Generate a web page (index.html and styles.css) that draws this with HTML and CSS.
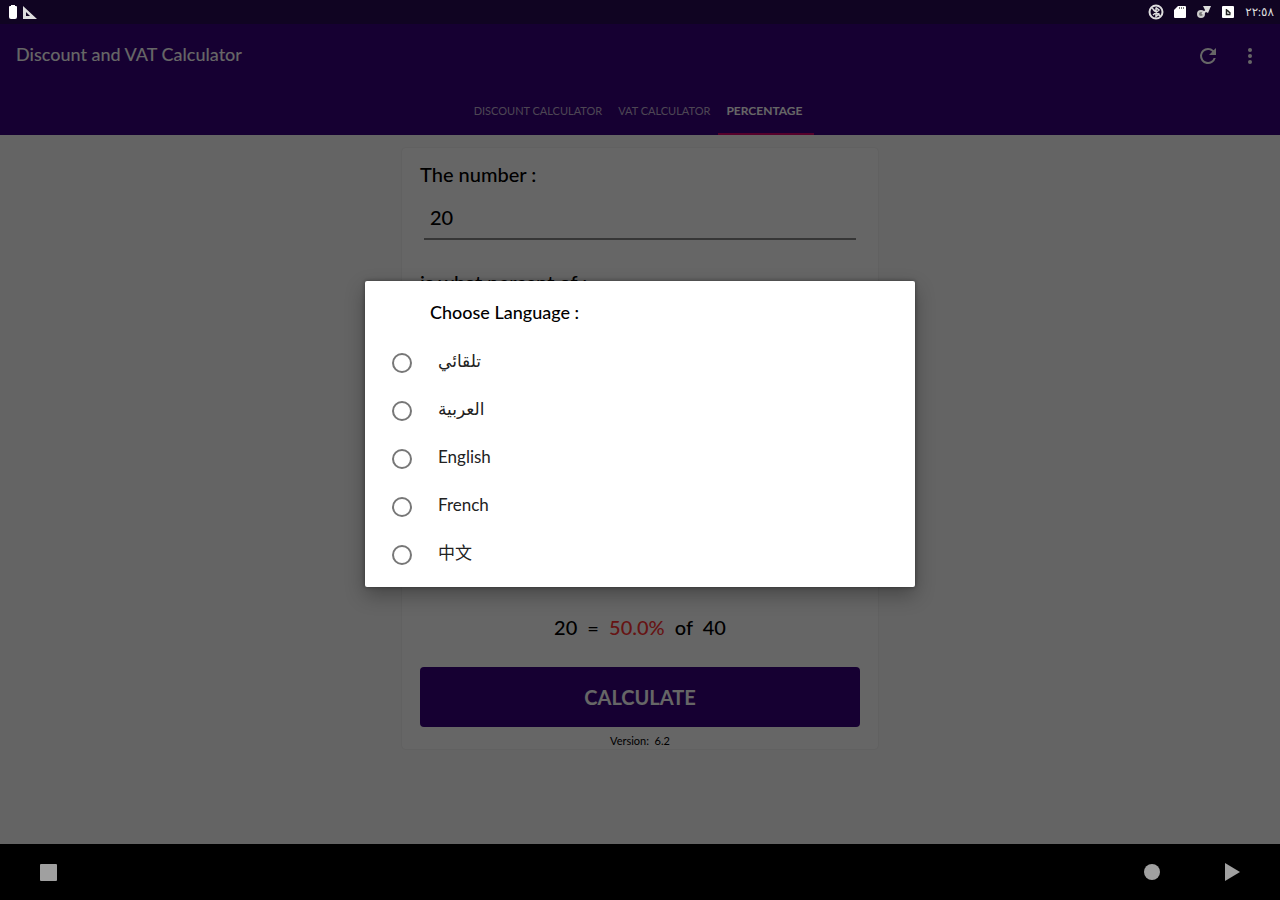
FILE: index.html
```html
<!doctype html>
<html lang="en">
<head>
    <meta charset="UTF-8">
    <meta name="viewport" content="width=device-width, initial-scale=1.0">
    <title>Discount and VAT Calculator</title>
    <link rel="stylesheet" href="styles.css">
</head>
<body>

    <div class="status">
        <div class="status__group">
            <svg width="10" height="16" viewBox="0 0 10 16"><path fill="#fff" d="M3 1h4v1h1q1 0 1 1v10q0 2-2 2H3q-2 0-2-2V3q0-1 1-1h1z"/></svg>
            <svg width="14" height="16" viewBox="0 0 14 16"><path fill="#ddd" fill-rule="evenodd" d="M0 2l14 13H0zM3 8v4h4z"/></svg>
        </div>
        <div class="status__group status__group-right">
            <svg width="16" height="16" viewBox="0 0 16 16" fill="none" stroke="#ddd"><circle cx="8" cy="8" r="6.5" stroke-width="2"/><path stroke-width="1.5" d="M4 4l8 8M8 3.5l3 2.5-6 5M8 3.5v9l3-2.5-6-4"/></svg>
            <svg width="16" height="16" viewBox="0 0 16 16"><path fill="#fff" d="M6 2h7q1 0 1 1v10q0 1-1 1H3q-1 0-1-1V6z"/><path stroke="#777" d="M7.5 3v2M9.500 3v2M11.500 3v2"/></svg>
            <svg width="16" height="16" viewBox="0 0 16 16"><path fill="#ddd" d="M7 2h8l-3 7-2-1z"/><circle cx="5" cy="10" r="3" fill="#777" stroke="#ccc" stroke-width="2"/><path stroke="#ddd" stroke-width="2" d="M6 10l5-4"/></svg>
            <svg width="16" height="16" viewBox="0 0 16 16"><rect x="2" y="2" width="12" height="12" rx="1" fill="#fff"/><path fill="none" stroke="#222" stroke-width="1.5" d="M6.500 5v5.500h4M6.500 5.500l4 4"/></svg>
            <span class="status__time">٢٢:٥٨</span>
        </div>
    </div>

    <div class="app">
        <header class="header">
            <div class="header__top">
                <h1>Discount and VAT Calculator</h1>
                <div class="header__actions">
                    <button type="button" aria-label="Refresh">
                        <svg width="24" height="24" viewBox="0 0 24 24"><path fill="#fff" d="M17.65 6.35A7.96 7.96 0 0 0 12 4a8 8 0 1 0 7.73 10h-2.08A6 6 0 1 1 12 6c1.66 0 3.14.69 4.22 1.78L13 11h7V4z"/></svg>
                    </button>
                    <button type="button" aria-label="More">
                        <svg width="24" height="24" viewBox="0 0 24 24" fill="#fff"><circle cx="12" cy="6" r="2"/><circle cx="12" cy="12" r="2"/><circle cx="12" cy="18" r="2"/></svg>
                    </button>
                </div>
            </div>
            <nav class="tabs">
                <a href="#">DISCOUNT CALCULATOR</a>
                <a href="#">VAT CALCULATOR</a>
                <a href="#" class="active">PERCENTAGE</a>
            </nav>
        </header>

        <main class="card">
            <div class="field">
                <label for="number">The number :</label>
                <input type="text" id="number" value="20">
            </div>
            <div class="field">
                <label for="total">is what percent of :</label>
                <input type="text" id="total" value="40">
            </div>
            <div class="result">20 &nbsp;=&nbsp; <span>50.0%</span> &nbsp;of&nbsp; 40</div>
            <button type="button" class="calculate">CALCULATE</button>
            <div class="version">Version: &nbsp;6.2</div>
        </main>

        <div class="overlay">
            <div class="dialog" role="dialog" aria-labelledby="dialog-title">
                <h2 id="dialog-title">Choose Language :</h2>
                <label class="option"><input type="radio" name="lang"><span lang="ar">تلقائي</span></label>
                <label class="option"><input type="radio" name="lang"><span lang="ar">العربية</span></label>
                <label class="option"><input type="radio" name="lang"><span>English</span></label>
                <label class="option"><input type="radio" name="lang"><span>French</span></label>
                <label class="option"><input type="radio" name="lang"><span lang="zh">中文</span></label>
            </div>
        </div>
    </div>

    <div class="navbar">
        <svg width="17" height="17" viewBox="0 0 17 17"><rect width="17" height="17" rx="1" fill="#a0a0a0"/></svg>
        <div class="navbar__right">
            <svg width="16" height="16" viewBox="0 0 16 16"><circle cx="8" cy="8" r="8" fill="#a0a0a0"/></svg>
            <svg width="16" height="18" viewBox="0 0 16 18"><path d="M1 0l15 9-15 9z" fill="#a0a0a0"/></svg>
        </div>
    </div>

</body>
</html>
```
FILE: styles.css
```css
*,*:before,*:after{
    box-sizing: border-box;
    font-family: "Lato", "DejaVu Sans", "Noto Sans CJK SC", sans-serif;
}
body{
    display: flex;
    flex-direction: column;
    min-height: 100vh;
    margin: 0;
    background: #000;
}
svg{
    display: block;
}
button{
    border: none;
    padding: 0;
    background: none;
    cursor: pointer;
}
.status{
    display: flex;
    justify-content: space-between;
    align-items: center;
    height: 24px;
    padding: 0 6px 0 8px;
    background: #100422;
}
.status__group{
    display: flex;
    align-items: center;
    gap: 5px;
}
.status__group-right{
    gap: 8px;
}
.status__time{
    width: 30px;
    font-size: 12px;
    line-height: 16px;
    text-align: right;
    color: #ddd;
}
.app{
    position: relative;
    flex: 1;
    background: #fafafa;
}
.header{
    background: #37007e;
}
.header__top{
    display: flex;
    justify-content: space-between;
    align-items: center;
    height: 63px;
    padding: 0 18px 0 16px;
}
h1{
    margin: 0;
    padding-bottom: 4px;
    font-size: 18px;
    line-height: 24px;
    font-weight: 500;
    color: #fff;
}
.header__actions{
    display: flex;
    gap: 18px;
}
.header__actions button{
    width: 24px;
}
.tabs{
    display: flex;
    justify-content: center;
    height: 48px;
}
.tabs a{
    padding: 0 8px;
    border-bottom: 2px solid transparent;
    font-size: 11px;
    line-height: 48px;
    text-decoration: none;
    color: #c0b0d0;
}
.tabs a.active{
    min-width: 96px;
    border-color: #d8006c;
    font-size: 12px;
    font-weight: bold;
    color: #fff;
}
.card{
    width: 476px;
    max-width: 100%;
    margin: 13px auto 0;
    padding: 12px 18px 0;
    border-radius: 4px;
    background: #fff;
    box-shadow: 0 0 2px rgba(0,0,0,.12);
}
.field{
    margin-bottom: 28px;
}
.field label{
    display: block;
    font-size: 20px;
    line-height: 28px;
    font-weight: 500;
}
.field input{
    display: block;
    width: calc(100% - 8px);
    height: 52px;
    margin: 0 4px;
    padding: 12px 6px 4px;
    border: none;
    border-bottom: 2px solid #888;
    font-size: 20px;
    font-weight: 500;
    background: none;
}
.result{
    margin-top: 265px;
    font-size: 20px;
    line-height: 28px;
    font-weight: 500;
    text-align: center;
}
.result span{
    color: #f33;
}
.calculate{
    display: block;
    width: 100%;
    height: 60px;
    margin-top: 26px;
    border-radius: 4px;
    font-size: 20px;
    font-weight: bold;
    color: #fff;
    background: #37007e;
}
.version{
    padding-top: 6px;
    font-size: 11px;
    line-height: 16px;
    text-align: center;
}
.overlay{
    position: absolute;
    inset: 0;
    display: flex;
    justify-content: center;
    align-items: center;
    background: rgba(0,0,0,.6);
}
.dialog{
    width: 550px;
    max-width: 90%;
    padding: 16px 25px 8px;
    border-radius: 2px;
    background: #fff;
    box-shadow: 0 8px 20px rgba(0,0,0,.3), 0 0 4px rgba(0,0,0,.4);
}
h2{
    margin: 0 0 12px;
    padding-left: 40px;
    font-size: 18px;
    line-height: 30px;
    font-weight: 500;
}
.option{
    display: flex;
    align-items: center;
    gap: 26px;
    height: 48px;
    padding-left: 2px;
    font-size: 17px;
    line-height: 24px;
    color: #222;
}
.option span{
    padding-bottom: 4px;
}
.option input{
    appearance: none;
    width: 20px;
    height: 20px;
    margin: 0;
    border: 2px solid #777;
    border-radius: 50%;
}
.option input:checked{
    background: #37007e;
}
.navbar{
    display: flex;
    justify-content: space-between;
    align-items: center;
    height: 56px;
    padding: 0 40px;
    background: #000;
}
.navbar__right{
    display: flex;
    align-items: center;
    gap: 64px;
}
```
